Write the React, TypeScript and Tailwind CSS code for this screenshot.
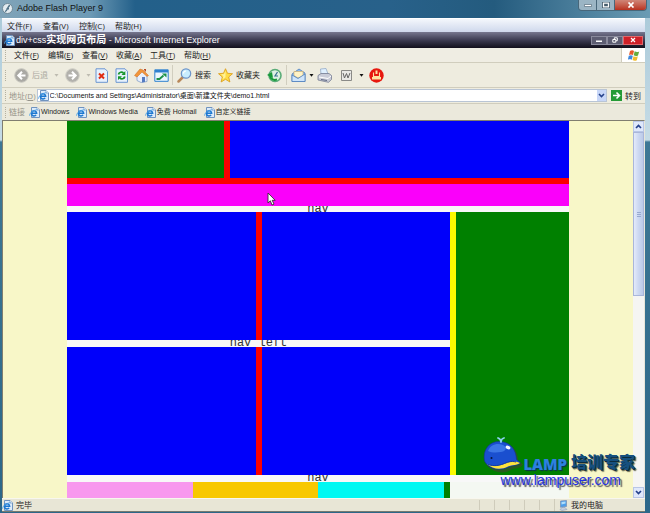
import type { ReactNode } from 'react'

const flashMenus = ['文件(F)', '查看(V)', '控制(C)', '帮助(H)']

const browserMenus = [
  { label: '文件', shortcut: 'F' },
  { label: '编辑', shortcut: 'E' },
  { label: '查看', shortcut: 'V' },
  { label: '收藏', shortcut: 'A' },
  { label: '工具', shortcut: 'T' },
  { label: '帮助', shortcut: 'H' },
]

const links = ['Windows', 'Windows Media', '免费 Hotmail', '自定义链接']

function PageIcon() {
  return (
    <svg viewBox="0 0 11 11" className="w-[11px] h-[11px] shrink-0" aria-hidden="true">
      <path d="M2.500 .5h5.500l2.500 2.500v7.500h-8z" fill="#dcebfa" stroke="#6f93bf" />
      <path d="M8 .5v2.500h2.500" fill="#fff" stroke="#6f93bf" strokeWidth=".7" />
      <path d="M2.600 6.200h5a2.600 2.600 0 1 0-.5 1.700" fill="none" stroke="#1d78d0" strokeWidth="1.600" />
      <path d="M.6 8.800C0 6.500 4 3 8.500 2.700" fill="none" stroke="#4fa5e8" strokeWidth=".8" />
    </svg>
  )
}

function Grip() {
  return <span className="w-0 h-[11px] shrink-0 border-l border-dotted border-[#b3b0a0]" />
}

function Arrow({ muted = false }: { muted?: boolean }) {
  return (
    <svg viewBox="0 0 5 3" className="w-[5px] h-[3px] shrink-0" aria-hidden="true">
      <path d="M.5 0h4L2.500 2.700z" fill={muted ? '#bdbbb0' : '#111'} />
    </svg>
  )
}

function ToolButton({ label, text, children }: { label: string; text?: string; children: ReactNode }) {
  return (
    <button type="button" aria-label={label} className="flex items-center gap-[3px] shrink-0 whitespace-nowrap">
      <svg viewBox="0 0 15 15" className="w-[15px] h-[15px]" aria-hidden="true">
        {children}
      </svg>
      {text}
    </button>
  )
}

function Toolbar() {
  return (
    <div className="h-[25px] shrink-0 flex items-center pl-[3px] bg-[#eeecdf] border-t border-[#d0cdbd]">
      <Grip />
      <div className="flex items-center gap-[6px] pl-2 text-[#aaa89e]">
        <ToolButton label="后退" text="后退">
          <circle cx="7.500" cy="7.500" r="6.800" fill="#aaa9a4" stroke="#c9c8c0" />
          <path d="M8 3.800L4.300 7.500 8 11.200M4.500 7.500h7" fill="none" stroke="#fff" strokeWidth="2" />
        </ToolButton>
        <Arrow muted />
        <ToolButton label="前进">
          <circle cx="7.500" cy="7.500" r="6.800" fill="#b2b1ac" stroke="#cfcec6" />
          <path d="M7 3.800l3.700 3.700L7 11.200M10.500 7.500h-7" fill="none" stroke="#fff" strokeWidth="2" />
        </ToolButton>
        <Arrow muted />
      </div>
      <div className="flex items-center gap-[5px] pl-[3px]">
        <ToolButton label="停止">
          <path d="M2 .8h9l2.500 2.500v11H2z" fill="#e7f1fd" stroke="#6b95d0" />
          <path d="M5 5.500l5 5m0-5l-5 5" stroke="#e02b12" strokeWidth="2" />
        </ToolButton>
        <ToolButton label="刷新">
          <path d="M2 .8h9l2.500 2.500v11H2z" fill="#e7f1fd" stroke="#6b95d0" />
          <path d="M4.500 6.500C5 4 8 3.500 9.500 5M10.800 8.500C10.200 11 7.500 11.500 5.800 10" fill="none" stroke="#17952b" strokeWidth="1.800" />
          <path d="M11.300 3v4H7.500zM4 12V8.200h4z" fill="#17952b" />
        </ToolButton>
        <ToolButton label="主页">
          <path d="M3 7l5-5 5 5v6.500l-6 1-4-2z" fill="#e9f0fc" stroke="#7694c4" strokeWidth=".7" />
          <path d="M.5 7.500L6 1l3 1 5.500 5.500-1.500 1L8 4 3 9z" fill="#f3953a" stroke="#c86b20" strokeWidth=".5" />
          <path d="M10 1h2v3l-2-2z" fill="#b84a25" />
          <path d="M8 9h3v5l-3 .5z" fill="#547bc1" />
        </ToolButton>
        <ToolButton label="全屏">
          <path d="M.8 1.800h13.400v11.500H.8z" fill="#eaf6ff" stroke="#2e80ce" />
          <path d="M1 2h13v2.500H1z" fill="#2e80ce" />
          <path d="M2.500 11h3l4-3.500" fill="none" stroke="#1b9147" strokeWidth="1.800" />
          <path d="M8 5.500h4.500v4z" fill="#1b9147" />
        </ToolButton>
      </div>
      <span className="w-px h-5 ml-[3px] mr-1 shrink-0 bg-[#d1cebf]" />
      <div className="flex items-center gap-[7px]">
        <ToolButton label="搜索" text="搜索">
          <path d="M6 9l-4.500 4.500" stroke="#b9885a" strokeWidth="2.500" strokeLinecap="round" />
          <circle cx="9" cy="5.500" r="4.700" fill="#c8edff" stroke="#6d94c9" strokeWidth="1.200" />
          <path d="M6.500 5.500A2.500 2.500 0 0 1 9 3" fill="none" stroke="#fff" strokeWidth="1.200" />
        </ToolButton>
        <ToolButton label="收藏夹" text="收藏夹">
          <path d="M7.500.7l2 4.600 5 .4-3.800 3.300 1.200 5-4.400-2.700L3.100 14l1.200-5L.5 5.700l5-.4z" fill="#ffdc45" stroke="#d99a16" strokeWidth=".8" />
          <path d="M7.500 2.800v6.500l-3 2 .9-3L3 6.200h3z" fill="#fff29b" />
        </ToolButton>
        <ToolButton label="历史">
          <circle cx="8" cy="7.500" r="6" fill="#dcf0e3" stroke="#5aac78" strokeWidth="1.600" />
          <path d="M10.500 4L8 8h3" fill="none" stroke="#386f8f" strokeWidth="1.200" />
          <path d="M0 7l5-3 1 6z" fill="#189a3a" />
          <path d="M3 8c1 3.500 4 4.500 7 3.500" fill="none" stroke="#189a3a" strokeWidth="2" />
        </ToolButton>
      </div>
      <span className="w-px h-5 ml-1 mr-1 shrink-0 bg-[#d1cebf]" />
      <div className="flex items-center gap-[3px]">
        <ToolButton label="邮件">
          <path d="M1 6l7-5 6 4v8.500H1z" fill="#8fbdf0" stroke="#4f80bd" strokeWidth=".8" />
          <path d="M3 3.500h9V8l-5 2-4-2.500z" fill="#fff3c6" stroke="#cfaa63" strokeWidth=".6" />
          <path d="M1 13.500V7l6 3.500L14 6v7.500z" fill="#cfe5fb" stroke="#4f80bd" strokeWidth=".8" />
        </ToolButton>
        <Arrow />
        <ToolButton label="打印">
          <path d="M4 6L3.500 1l5.500-.5 2 5.500z" fill="#dff0ff" stroke="#8aa4c4" strokeWidth=".7" />
          <path d="M1 7.500L4 5.500h8l2.500 2v4l-3 2.800L1 12z" fill="#c9ccd8" stroke="#777e93" strokeWidth=".8" />
          <path d="M2 9l9 1.500 3-2.500" fill="none" stroke="#fff" />
          <path d="M4 11.500l6 1" stroke="#626b84" />
        </ToolButton>
      </div>
      <div className="flex items-center gap-[5px] pl-[7px]">
        <ToolButton label="编辑">
          <path d="M2.500 2.500h10v10h-10z" fill="#e9e9e6" stroke="#8a8a87" />
          <path d="M4 5l1.500 5 2-4.500 1.500 4.500 2-5" fill="none" stroke="#666" />
        </ToolButton>
        <Arrow />
        <ToolButton label="信使">
          <circle cx="7.500" cy="7.500" r="7.200" fill="#e7180e" />
          <path d="M3 9h9v2.500H3z" fill="#ffe3a0" />
          <path d="M4.500 4.500v4h6v-4" fill="none" stroke="#ffe3a0" strokeWidth="1.100" />
          <path d="M7.500 2.500v3.500" stroke="#ffe3a0" strokeWidth="2" />
        </ToolButton>
      </div>
    </div>
  )
}

function AddressBar() {
  return (
    <form className="h-4 shrink-0 flex items-center pl-[3px] pr-1 border-t border-[#d0cdbd] bg-[#eeecdf]" onSubmit={e => e.preventDefault()}>
      <Grip />
      <label htmlFor="address" className="pl-[3px] pr-px shrink-0 text-[#96948a]">
        地址(<u>D</u>)
      </label>
      <div className="flex-1 min-w-0 h-[13px] flex items-center gap-px bg-white border border-[#b9c5d5]">
        <PageIcon />
        <input
          id="address"
          type="text"
          defaultValue="C:\Documents and Settings\Administrator\桌面\新建文件夹\demo1.html"
          className="flex-1 min-w-0 h-[11px] bg-transparent outline-none font-['Liberation_Sans','Noto_Sans_CJK_SC',sans-serif] text-[7px] text-[#111]"
        />
        <button type="button" aria-label="地址列表" className="w-[9px] h-[11px] flex items-center justify-center bg-[#c8d7f8]">
          <svg viewBox="0 0 7 5" className="w-[7px] h-[5px]" aria-hidden="true">
            <path d="M1 1l2.500 2.500L6 1" fill="none" stroke="#24418b" strokeWidth="1.600" />
          </svg>
        </button>
      </div>
      <button type="submit" className="ml-1 flex items-center gap-[3px] shrink-0">
        <svg viewBox="0 0 11 11" className="w-[11px] h-[11px]" aria-hidden="true">
          <path d="M0 0h11v11H0z" fill="#259b36" />
          <path d="M2 5.500h6M5.500 2.500l3 3-3 3" fill="none" stroke="#fff" strokeWidth="1.600" />
        </svg>
        转到
      </button>
    </form>
  )
}

function Caption({ children }: { children: string }) {
  return (
    <p className="h-[6px] overflow-hidden whitespace-pre bg-[#f8f8f8] text-center font-['Liberation_Mono',monospace] text-[12px] leading-[6px] text-[#333]">
      {children}
    </p>
  )
}

function BluePair() {
  return (
    <div className="h-32 flex">
      <div className="flex-1 bg-[#0000fa]" />
      <div className="w-[6px] bg-[#fb0000]" />
      <div className="flex-1 bg-[#0000fa]" />
    </div>
  )
}

function DemoPage() {
  return (
    <main className="flex-1 min-w-0 overflow-hidden px-16 bg-[#f8f7c8]">
      <div className="h-[57px] flex">
        <div className="w-[157px] bg-[#008000]" />
        <div className="w-[6px] bg-[#fb0000]" />
        <div className="flex-1 bg-[#0000fa]" />
      </div>
      <div className="h-[6px] bg-[#fb0000]" />
      <div className="h-[22px] bg-[#fa00fa]" />
      <Caption>nav</Caption>
      <div className="flex">
        <div className="flex-1">
          <BluePair />
          <div className="pb-px bg-[#f8f8f8]">
            <Caption>nav left</Caption>
          </div>
          <BluePair />
        </div>
        <div className="w-[6px] bg-[#fbfb00]" />
        <div className="w-[113px] bg-[#008000]" />
      </div>
      <div className="pb-px bg-[#f8f8f8]">
        <Caption>nav</Caption>
      </div>
      <div className="h-10 flex bg-[#f4f8f2]">
        <div className="w-1/4 bg-[#f898ee]" />
        <div className="w-1/4 bg-[#f8c800]" />
        <div className="w-1/4 bg-[#00f8f2]" />
        <div className="w-[6px] bg-[#008000]" />
      </div>
    </main>
  )
}

function Scrollbar() {
  const button = 'h-[11px] w-full flex items-center justify-center border border-[#b8c6e6] bg-[#dfe8fb]'
  return (
    <div className="w-[11px] shrink-0 flex flex-col bg-[#f5f5f3]">
      <button type="button" aria-label="向上滚动" className={button}>
        <svg viewBox="0 0 7 5" className="w-[7px] h-[5px]" aria-hidden="true">
          <path d="M1 4l2.500-2.500L6 4" fill="none" stroke="#24418b" strokeWidth="1.700" />
        </svg>
      </button>
      <div className="h-[164px] flex flex-col items-center justify-center gap-px border border-[#a9b6da] bg-linear-to-r from-[#e3eafa] via-[#ccd8f1] to-[#bccae8]">
        <span className="w-1 h-px bg-[#98a9cf]" />
        <span className="w-1 h-px bg-[#98a9cf]" />
        <span className="w-1 h-px bg-[#98a9cf]" />
      </div>
      <div className="flex-1" />
      <button type="button" aria-label="向下滚动" className={button}>
        <svg viewBox="0 0 7 5" className="w-[7px] h-[5px]" aria-hidden="true">
          <path d="M1 1l2.500 2.500L6 1" fill="none" stroke="#24418b" strokeWidth="1.700" />
        </svg>
      </button>
    </div>
  )
}

function Watermark() {
  return (
    <div className="absolute right-[15px] bottom-[26px] flex flex-col items-end">
      <div className="flex items-end">
        <svg viewBox="0 0 40 36" className="w-10 h-9" aria-hidden="true">
          <path d="M3 27C0 18 4 6 16 5.500c13-.5 19 9 19 18l5 4c-3 5-9 3-13 6-7 4-18 2-24-6.500z" fill="#3c4a2c" opacity=".7" />
          <path d="M1.500 24C-.5 13 6 4.500 16 4.500c11 0 17 8 17.500 18l4 3.500c-4 3-8 2-12 4-9 4.500-20 2-24-6z" fill="#1a4fcf" stroke="#12358f" strokeWidth=".6" />
          <path d="M5 14c2-6 9-8.500 15-6 4 2 4 6-2 7-5 .8-9 .8-13-1z" fill="#4580ea" opacity=".8" />
          <path d="M4 27c6 3 12 2 17 0 5-2 9-4 16-1-3 2.500-8 1.500-12 3.500-7 3.500-15 3-21-2.500z" fill="#ffe43c" />
          <path d="M5 27.500c6 2 11 1 15-.5 4-1.500 8-3.500 13-2" fill="none" stroke="#153c9f" />
          <ellipse cx="25" cy="10.500" rx="2.500" ry="1.700" fill="#f3f8ff" transform="rotate(25 25 10.500)" />
          <circle cx="8.500" cy="21" r="1" fill="#061337" />
          <path d="M18 5c0-2-.5-3-3-4m3 4c0-2 1-3.500 3-4" fill="none" stroke="#8ad0ec" strokeWidth="1.800" strokeLinecap="round" />
        </svg>
        <span className="mb-px mr-1 font-['Open_Sans',sans-serif] text-[15px] leading-[16px] font-extrabold text-[#2d80e0] [text-shadow:1px_1px_1px_#0a3050]">
          LAMP
        </span>
        <span className="mb-[2px] font-['Noto_Sans_CJK_SC',sans-serif] text-[16px] leading-[20px] font-black text-[#16507f] [text-shadow:1px_1px_0_#0c2b3d,2px_2px_1px_#6b6b50]">
          培训专家
        </span>
      </div>
      <a
        href="#lampuser"
        className="mr-[14px] font-['Liberation_Sans',sans-serif] text-[14px] leading-[14px] text-[#2432e0] [text-shadow:2px_2px_1px_#555]"
      >
        www.lampuser.com
      </a>
    </div>
  )
}

export default function App() {
  return (
    <div className="relative h-screen flex flex-col overflow-hidden pl-[2px] pr-[5px] pb-px bg-[linear-gradient(#a8c8d8_0px,#c6dce6_140px,#3e7895_142px,#2c6789_100%)] font-['Open_Sans','Noto_Sans_CJK_SC',sans-serif] text-[8px] leading-[12px] text-[#222]">
      <header className="-ml-[2px] -mr-[5px] h-[18px] shrink-0 flex items-start justify-between pl-[2px] pr-[3px] bg-[linear-gradient(90deg,#7fa3b8_0px,#6d9ab5_90px,#23608a_135px,#28618a_60%,#245b7e_76%,#6b9cb4_100%)]">
        <h1 className="pt-[2px] flex items-center gap-1 font-['Liberation_Sans',sans-serif] text-[9px] text-[#111]">
          <svg viewBox="0 0 11 11" className="w-[11px] h-[11px]" aria-hidden="true">
            <circle cx="5.500" cy="5.500" r="5" fill="#e2ebf0" stroke="#6f8897" />
            <path d="M8 2.500C5.500 2.500 5.500 8.500 3 8.500M4.500 5.700h2.500" fill="none" stroke="#4d6f84" strokeWidth="1.400" />
          </svg>
          Adobe Flash Player 9
        </h1>
        <div className="flex h-[11px] rounded-b-sm overflow-hidden border border-t-0 border-[#48677a]">
          <button type="button" aria-label="最小化" className="w-[18px] flex items-center justify-center bg-[#9bb5c4] border-r border-[#48677a]">
            <svg viewBox="0 0 8 6" className="w-2 h-[6px]"><path d="M.5 2.500h7v2h-7z" fill="#fff" stroke="#445c6b" strokeWidth=".6" /></svg>
          </button>
          <button type="button" aria-label="最大化" className="w-[18px] flex items-center justify-center bg-[#9bb5c4] border-r border-[#48677a]">
            <svg viewBox="0 0 8 6" className="w-2 h-[6px]"><path d="M0 0h8v6H0z" fill="#445c6b" /><path d="M1.500 1.200h5v3.600h-5z" fill="none" stroke="#fff" strokeWidth="1.300" /></svg>
          </button>
          <button type="button" aria-label="关闭" className="w-[31px] flex items-center justify-center bg-linear-to-b from-[#cf8577] to-[#b8301e]">
            <svg viewBox="0 0 8 6" className="w-2 h-[6px]"><path d="M1.500.5l5 5m0-5l-5 5" stroke="#fff" strokeWidth="1.700" /></svg>
          </button>
        </div>
      </header>

      <nav className="h-[14px] shrink-0 flex items-center gap-[9px] pl-[5px] border-t border-white bg-linear-to-b from-[#f4f7fc] to-[#cfd8ec]">
        {flashMenus.map(menu => (
          <button key={menu} type="button" className="w-[27px] text-left whitespace-nowrap">{menu}</button>
        ))}
      </nav>

      <div className="h-4 shrink-0 flex items-center justify-between pl-[2px] pr-[2px] bg-linear-to-b from-[#77778f] via-[#3d3c52] to-[#12101c] text-white">
        <h2 className="flex items-center gap-px whitespace-nowrap font-['Liberation_Sans','Noto_Sans_CJK_SC',sans-serif] text-[9px]">
          <PageIcon />
          <span>div+css<span className="text-[10px] font-bold">实现网页布局</span> - Microsoft Internet Explorer</span>
        </h2>
        <div className="flex h-[9px]">
          <button type="button" aria-label="最小化窗口" className="w-4 flex items-center justify-center bg-[#5d5d72] border border-[#8a8a9c]">
            <svg viewBox="0 0 6 6" className="w-[6px] h-[6px]"><path d="M0 3.500h6v1.500H0z" fill="#fff" /></svg>
          </button>
          <button type="button" aria-label="还原窗口" className="w-4 flex items-center justify-center bg-[#5d5d72] border border-[#8a8a9c]">
            <svg viewBox="0 0 6 6" className="w-[6px] h-[6px]"><path d="M.8 2.500h3v2.700h-3zM2.300 2.500V.8h3v2.900H4" fill="none" stroke="#fff" /></svg>
          </button>
          <button type="button" aria-label="关闭窗口" className="w-5 flex items-center justify-center bg-[#cf2028] border border-[#e0656a]">
            <svg viewBox="0 0 6 6" className="w-[6px] h-[6px]"><path d="M1 1l4 4m0-4L1 5" stroke="#fff" strokeWidth="1.200" /></svg>
          </button>
        </div>
      </div>

      <div className="h-[14px] shrink-0 flex items-center pl-[3px] bg-[#efede3]">
        <Grip />
        <nav className="flex-1 flex items-center gap-[9px] pl-2">
          {browserMenus.map(menu => (
            <button key={menu.label} type="button" className="w-[25px] whitespace-nowrap">
              {menu.label}(<u>{menu.shortcut}</u>)
            </button>
          ))}
        </nav>
        <div className="w-6 h-full flex items-center justify-center bg-white border-l border-[#d0cdbd]">
          <svg viewBox="0 0 12 11" className="w-3 h-[11px]" aria-hidden="true">
            <path d="M2 1c1.500-1 3-.8 4 0L5 5c-1.500-.8-3-.6-4 0z" fill="#e8582a" />
            <path d="M6.700 1.300c1.500 1 3 1 4.500.2L10 5.500c-1.500.8-3 .6-4.300-.2z" fill="#65ab3c" />
            <path d="M.8 5.800c1.500-.8 2.800-.8 4 0l-1 4c-1.500-.8-3-.6-4 0z" fill="#3c87dd" />
            <path d="M5.500 6.200c1.500.8 3 .8 4.300 0l-1 4c-1.500.8-3 .6-4.300-.2z" fill="#f2bc2d" />
          </svg>
        </div>
      </div>

      <Toolbar />
      <AddressBar />

      <div className="h-[17px] shrink-0 flex items-center pl-[3px] border-t border-[#d0cdbd] bg-[#ebe9dc]">
        <Grip />
        <span className="pl-[3px] pr-1 text-[#96948a]">链接</span>
        <nav className="flex items-center gap-[7px] font-['Liberation_Sans','Noto_Sans_CJK_SC',sans-serif] text-[7px]">
          {links.map(link => (
            <a key={link} href={`#${link}`} className="flex items-center gap-px whitespace-nowrap">
              <PageIcon />
              {link}
            </a>
          ))}
        </nav>
      </div>

      <div className="flex-1 min-h-0 flex border-t border-l border-[#807e70] border-r border-r-[#e8e6da]">
        <DemoPage />
        <Scrollbar />
      </div>

      <footer className="h-[14px] shrink-0 flex items-center border-t border-[#f8f7ee] bg-[#e8e6d6] border-b border-b-[#777a70]">
        <PageIcon />
        <span className="flex-1 pl-[3px]">完毕</span>
        <div className="h-[10px] flex">
          {[1, 2, 3, 4, 5].map(pane => (
            <span key={pane} className="w-[15px] border-l border-[#cfccbb]" />
          ))}
        </div>
        <div className="w-[91px] flex items-center gap-[3px] pl-1 border-l border-[#cfccbb]">
          <svg viewBox="0 0 9 11" className="w-[9px] h-[11px]" aria-hidden="true">
            <path d="M1.500 1l6-.5v6l-6 .8z" fill="#4c9eea" stroke="#7c93b5" strokeWidth=".8" />
            <path d="M2.500 2l4-.4v2l-4 1z" fill="#aeddfb" />
            <path d="M3 7.500h3l2 2-5 1-2-1z" fill="#c6cfdd" stroke="#7c93b5" strokeWidth=".5" />
          </svg>
          我的电脑
        </div>
      </footer>

      <Watermark />

      <svg viewBox="0 0 9 14" className="absolute left-[267px] top-[192px] w-[9px] h-[14px]" aria-hidden="true">
        <path d="M1 1v10l2.300-2.200L5 13l2-.9-1.800-3.800h3z" fill="#fff" stroke="#333" strokeWidth=".9" />
      </svg>
    </div>
  )
}
